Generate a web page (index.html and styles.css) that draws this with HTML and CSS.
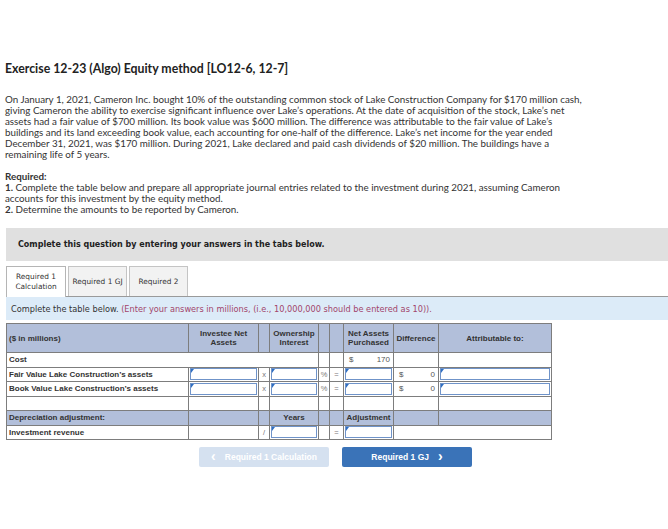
FILE: index.html
```html
<!DOCTYPE html>
<html>
<head>
<meta charset="utf-8">
<link rel="stylesheet" href="styles.css">
</head>
<body>
<div class="page">
  <h1 class="title">Exercise 12-23 (Algo) Equity method [LO12-6, 12-7]</h1>
  <p class="intro">On January 1, 2021, Cameron Inc. bought 10% of the outstanding common stock of Lake Construction Company for $170 million cash,<br>giving Cameron the ability to exercise significant influence over Lake’s operations. At the date of acquisition of the stock, Lake’s net<br>assets had a fair value of $700 million. Its book value was $600 million. The difference was attributable to the fair value of Lake’s<br>buildings and its land exceeding book value, each accounting for one-half of the difference. Lake’s net income for the year ended<br>December 31, 2021, was $170 million. During 2021, Lake declared and paid cash dividends of $20 million. The buildings have a<br>remaining life of 5 years.</p>
  <p class="req"><span class="req-h">Required:</span><br><b>1.</b> Complete the table below and prepare all appropriate journal entries related to the investment during 2021, assuming Cameron<br>accounts for this investment by the equity method.<br><b>2.</b> Determine the amounts to be reported by Cameron.</p>
</div>

<div class="qbox">Complete this question by entering your answers in the tabs below.</div>

<div class="tabs">
  <div class="tab active">Required 1<br>Calculation</div>
  <div class="tab">Required 1 GJ</div>
  <div class="tab">Required 2</div>
</div>
<div class="note"><span class="note-d">Complete the table below.</span>&nbsp;<span class="note-r">(Enter your answers in millions, (i.e., 10,000,000 should be entered as 10)).</span></div>

<table class="grid">
  <colgroup>
    <col class="c1"><col class="c2"><col class="c3"><col class="c4"><col class="c5"><col class="c6"><col class="c7"><col class="c8"><col class="c9">
  </colgroup>
  <tr class="head">
    <td class="left">($ in millions)</td>
    <td>Investee Net<br>Assets</td>
    <td></td>
    <td>Ownership<br>Interest</td>
    <td></td>
    <td></td>
    <td>Net Assets<br>Purchased</td>
    <td>Difference</td>
    <td>Attributable to:</td>
  </tr>
  <tr>
    <td class="left" colspan="4">Cost</td>
    <td></td>
    <td></td>
    <td><div class="money"><span>$</span><span>170</span></div></td>
    <td></td>
    <td></td>
  </tr>
  <tr>
    <td class="left">Fair Value Lake Construction’s assets</td>
    <td class="in"><div class="box"></div></td>
    <td class="op">x</td>
    <td class="in"><div class="box"></div></td>
    <td class="op">%</td>
    <td class="op">=</td>
    <td class="in"><div class="box"></div></td>
    <td><div class="money"><span>$</span><span>0</span></div></td>
    <td class="in"><div class="box"></div></td>
  </tr>
  <tr>
    <td class="left">Book Value Lake Construction’s assets</td>
    <td class="in"><div class="box"></div></td>
    <td class="op">x</td>
    <td class="in"><div class="box"></div></td>
    <td class="op">%</td>
    <td class="op">=</td>
    <td class="in"><div class="box"></div></td>
    <td><div class="money"><span>$</span><span>0</span></div></td>
    <td class="in"><div class="box"></div></td>
  </tr>
  <tr>
    <td></td><td></td><td></td><td></td><td></td><td></td><td></td><td></td><td></td>
  </tr>
  <tr class="sub">
    <td class="left">Depreciation adjustment:</td>
    <td></td>
    <td></td>
    <td>Years</td>
    <td></td>
    <td></td>
    <td>Adjustment</td>
    <td></td>
    <td></td>
  </tr>
  <tr>
    <td class="left">Investment revenue</td>
    <td></td>
    <td class="op">/</td>
    <td class="in"><div class="box"></div></td>
    <td></td>
    <td class="op">=</td>
    <td class="in"><div class="box"></div></td>
    <td colspan="2"></td>
  </tr>
</table>

<div class="nav">
  <div class="btn prev"><span class="chev">‹</span>Required 1 Calculation</div>
  <div class="btn next">Required 1 GJ<span class="chev r">›</span></div>
</div>
</body>
</html>
```
FILE: styles.css
```css
html, body {
  margin: 0;
  padding: 0;
  background: #ffffff;
}
body {
  width: 668px;
  color: #333333;
  font-family: "Lato", "Liberation Sans", sans-serif;
}
.page {
  padding: 62px 0 0 5px;
}
.title {
  margin: 0;
  font-size: 12.3px;
  line-height: 14px;
  font-weight: 700;
  color: #222222;
}
.intro {
  margin: 18px 0 0 0;
  font-size: 9.8px;
  line-height: 11px;
  white-space: nowrap;
}
.req {
  margin: 11px 0 0 0;
  font-size: 9.8px;
  line-height: 11px;
  white-space: nowrap;
}
.req-h {
  font-weight: 700;
}
.req b {
  font-weight: 700;
}

.qbox {
  margin: 13px 0 0 6px;
  height: 33px;
  background: #e0e0e0;
  display: flex;
  align-items: center;
  padding-left: 12px;
  font-family: "DejaVu Sans", "Liberation Sans", sans-serif;
  font-weight: 700;
  font-size: 8px;
  color: #222222;
}

.tabs {
  margin: 5px 0 0 6px;
  display: flex;
  gap: 2px;
  height: 30px;
  position: relative;
  z-index: 1;
}
.tab {
  box-sizing: border-box;
  height: 30px;
  border: 1px solid #c4c4c4;
  border-bottom: none;
  background: #f2f2f2;
  display: flex;
  align-items: center;
  justify-content: center;
  text-align: center;
  font-family: "DejaVu Sans", "Liberation Sans", sans-serif;
  font-size: 7.4px;
  line-height: 10px;
  color: #333333;
  width: 59px;
}
.tab.active {
  width: 60px;
  background: #ffffff;
  border-color: #b5b5b5;
  height: 31px;
}
.note {
  margin-left: 6px;
  box-sizing: border-box;
  height: 24px;
  border-top: 1px solid #9a9a9a;
  background: #dcebf8;
  display: flex;
  align-items: center;
  padding-left: 5px;
  font-family: "DejaVu Sans", "Liberation Sans", sans-serif;
  font-size: 8.2px;
  white-space: nowrap;
}
.note-d {
  color: #333333;
}
.note-r {
  color: #a2456b;
}

.grid {
  margin: 3px 0 0 6px;
  border-collapse: collapse;
  table-layout: fixed;
  width: 545px;
  font-family: "Liberation Sans", Arial, sans-serif;
  font-size: 8px;
  font-weight: 700;
  color: #333333;
}
.c1 { width: 182px; }
.c2 { width: 70px; }
.c3 { width: 11px; }
.c4 { width: 49px; }
.c5 { width: 11px; }
.c6 { width: 14px; }
.c7 { width: 50px; }
.c8 { width: 45px; }
.c9 { width: 113px; }
.grid td {
  border: 1px solid #7d7d7d;
  height: 13.5px;
  padding: 0;
  text-align: center;
  vertical-align: middle;
  line-height: 9px;
  overflow: hidden;
}
.grid td.left {
  text-align: left;
  padding-left: 2px;
}
.grid tr.head td {
  height: 28px;
  background: #b2bfda;
  line-height: 9px;
}
.grid tr.sub td {
  background: #b2bfda;
}
.grid td.op {
  font-weight: 400;
  color: #777777;
  font-size: 7.5px;
}
.grid td.in {
  padding: 0 1px;
}
.box {
  box-sizing: border-box;
  height: 12px;
  border: 1.5px solid #6f93c9;
  background: #ffffff;
  position: relative;
}
.box::before {
  content: "";
  position: absolute;
  left: 0;
  top: 0;
  width: 0;
  height: 0;
  border-top: 4px solid #2e6ec2;
  border-right: 3px solid transparent;
}
.money {
  display: flex;
  justify-content: space-between;
  padding: 0 3px 0 5px;
  font-weight: 400;
  color: #555555;
}

.nav {
  margin: 7px 0 0 199px;
  display: flex;
  gap: 13px;
}
.btn {
  width: 130px;
  height: 20px;
  border-radius: 2px;
  display: flex;
  align-items: center;
  justify-content: center;
  font-family: "Liberation Sans", Arial, sans-serif;
  font-weight: 700;
  font-size: 8.5px;
  color: #ffffff;
}
.btn.prev {
  background: #d5e1f0;
}
.btn.next {
  background: #3a73b8;
}
.chev {
  font-size: 14px;
  line-height: 10px;
  margin-right: 9px;
  position: relative;
  top: -1px;
}
.chev.r {
  margin-right: 0;
  margin-left: 9px;
}
```
